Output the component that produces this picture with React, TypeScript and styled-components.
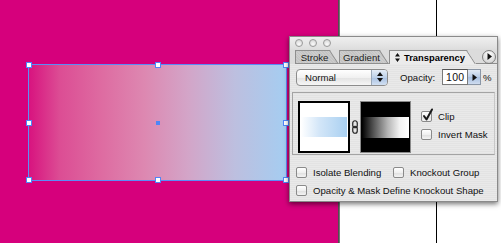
import React from "react";
import styled, { createGlobalStyle } from "styled-components";

const Global = createGlobalStyle`
  html, body { margin: 0; padding: 0; }
  body {
    width: 501px;
    height: 243px;
    overflow: hidden;
    font-family: "Liberation Sans", Arial, sans-serif;
    font-size: 9.6px;
    color: #111;
  }
`;

const Stage = styled.div`
  position: relative;
  width: 501px;
  height: 243px;
  display: flex;
  overflow: hidden;
`;

const Artboard = styled.div`
  position: relative;
  flex: none;
  width: 338px;
  background: #d6007c;
`;

const ArtEdge = styled.div`
  flex: none;
  width: 2px;
  background: linear-gradient(90deg, #3c3c3c, #8a8a8a);
`;

const Paper = styled.div`
  flex: 1;
  display: flex;
  padding-left: 96px;
  background: #fff;
`;

const Guide = styled.div`
  width: 1px;
  background: #000;
`;

const Shape = styled.div`
  position: absolute;
  left: 28px;
  top: 64px;
  width: 259px;
  height: 117px;
  box-sizing: border-box;
  border: 1.5px solid #5a8cf8;
  background: linear-gradient(
    90deg,
    #d8137f 0%,
    #dc4d94 12%,
    #de6ba1 28%,
    #dd88b1 45%,
    #d3a5c8 62%,
    #bdbfdf 80%,
    #a5cdf1 100%
  );
`;

const Handle = styled.div<{ $x: string; $y: string; $center?: boolean }>`
  position: absolute;
  left: ${(p) => p.$x};
  top: ${(p) => p.$y};
  width: ${(p) => (p.$center ? "4px" : "6px")};
  height: ${(p) => (p.$center ? "4px" : "6px")};
  box-sizing: border-box;
  transform: translate(-50%, -50%);
  background: ${(p) => (p.$center ? "#4f86f7" : "#fff")};
  border: ${(p) => (p.$center ? "none" : "1px solid #4f86f7")};
`;

const Palette = styled.div`
  position: absolute;
  left: 289px;
  top: 36px;
  width: 209px;
  height: 166px;
  box-sizing: border-box;
  border: 1px solid #8a8a8a;
  background: repeating-linear-gradient(0deg, #e9e9e9 0px, #e9e9e9 1px, #e3e3e3 1px, #e3e3e3 2px);
  box-shadow: 0 2px 5px rgba(0, 0, 0, 0.55);
  display: flex;
  flex-direction: column;
`;

const TitleBar = styled.div`
  height: 12px;
  flex: none;
  display: flex;
  align-items: center;
  gap: 6px;
  padding-left: 5px;
  background: linear-gradient(#efefef, #dedede);
`;

const Light = styled.div`
  width: 8px;
  height: 8px;
  box-sizing: border-box;
  border-radius: 50%;
  border: 1px solid #9a9a9a;
  background: radial-gradient(circle at 50% 70%, #fafafa, #d0d0d0);
`;

const TabBar = styled.div`
  height: 15px;
  flex: none;
  display: flex;
  align-items: flex-end;
  padding-left: 5px;
  background: #dcdcdc;
  position: relative;
`;

const Tab = styled.div<{ $active?: boolean; $w: number }>`
  position: relative;
  width: ${(p) => p.$w}px;
  height: 14px;
  box-sizing: border-box;
  display: flex;
  align-items: center;
  justify-content: center;
  gap: 4px;
  padding-right: 6px;
  font-weight: ${(p) => (p.$active ? "bold" : "normal")};
  font-size: ${(p) => (p.$active ? "9.4px" : "9.6px")};
  color: ${(p) => (p.$active ? "#000" : "#222")};
  background: ${(p) => (p.$active ? "#ebebeb" : "repeating-linear-gradient(45deg, #c4c4c4 0 1px, #cdcdcd 1px 2px)")};
  border-top: 1px solid #8e8e8e;
  border-left: 1px solid #8e8e8e;
  border-bottom: ${(p) => (p.$active ? "none" : "1px solid #8e8e8e")};
  clip-path: polygon(0 0, calc(100% - 9px) 0, 100% 100%, 0 100%);
  &::after {
    content: "";
    position: absolute;
    right: 4px;
    top: -2px;
    width: 1px;
    height: 18px;
    background: #8e8e8e;
    transform: rotate(-33deg);
  }
`;

const TabFill = styled.div`
  flex: 1;
  align-self: stretch;
  display: flex;
  align-items: center;
  justify-content: flex-end;
  padding-right: 1px;
  border-bottom: 1px solid #8e8e8e;
  box-sizing: border-box;
`;

const MenuButton = styled.div`
  width: 14px;
  height: 14px;
  box-sizing: border-box;
  border-radius: 50%;
  border: 1px solid #7e7e7e;
  background: radial-gradient(circle at 50% 30%, #ffffff, #c9c9c9);
  display: flex;
  align-items: center;
  justify-content: center;
  margin-top: 1px;
`;

const Body = styled.div`
  flex: 1;
  display: flex;
  flex-direction: column;
  padding: 4px 2px 0 2px;
`;

const TopRow = styled.div`
  display: flex;
  align-items: center;
  height: 18px;
  padding-left: 4px;
`;

const Select = styled.div`
  width: 92px;
  height: 17px;
  box-sizing: border-box;
  display: flex;
  border: 1px solid #8c8c8c;
  border-radius: 4px;
  overflow: hidden;
  background: linear-gradient(#ffffff, #f1f1f1 50%, #e2e2e2 51%, #f6f6f6);
`;

const SelectLabel = styled.div`
  flex: 1;
  display: flex;
  align-items: center;
  padding-left: 8px;
`;

const SelectArrows = styled.div`
  width: 15px;
  border-left: 1px solid #9aa8b8;
  display: flex;
  align-items: center;
  justify-content: center;
  background: linear-gradient(#e4ecf6, #bcd0e8 50%, #a9c1e2 51%, #d2e0f2);
`;

const FieldLabel = styled.div`
  margin-left: 12px;
  width: 42px;
`;

const NumInput = styled.div`
  width: 26px;
  height: 16px;
  box-sizing: border-box;
  border: 1px solid #7a7a7a;
  border-top-color: #555;
  background: #fff;
  display: flex;
  align-items: center;
  padding-left: 3px;
  font-size: 10.5px;
  letter-spacing: 0.3px;
`;

const StepButton = styled.div`
  width: 13px;
  height: 16px;
  box-sizing: border-box;
  border: 1px solid #8a96a6;
  border-left: none;
  background: linear-gradient(#e2eaf4, #b8cce6 50%, #a6bfe0 51%, #cfdcef);
  display: flex;
  align-items: center;
  justify-content: center;
`;

const Percent = styled.div`
  margin-left: 2px;
`;

const Group = styled.div`
  margin-top: 6px;
  height: 63px;
  box-sizing: border-box;
  border: 1px solid #a4a4a4;
  border-right-color: #c8c8c8;
  display: flex;
  align-items: flex-end;
  padding-left: 5px;
`;

const ArtThumb = styled.div`
  width: 52px;
  height: 52px;
  box-sizing: border-box;
  border: 2px solid #000;
  background: #fff;
  display: flex;
  flex-direction: column;
  justify-content: center;
  padding: 0 1px;
  margin-bottom: 1px;
`;

const ArtSwatch = styled.div`
  height: 20px;
  background: linear-gradient(90deg, #ffffff, #d3e6f8 40%, #a9d0f1);
`;

const LinkIcon = styled.div`
  width: 10px;
  height: 52px;
  margin-bottom: 1px;
  display: flex;
  align-items: center;
  justify-content: center;
`;

const MaskThumb = styled.div`
  width: 51px;
  height: 52px;
  box-sizing: border-box;
  border: 1px solid #8a8a8a;
  background: #000;
  display: flex;
  flex-direction: column;
  justify-content: center;
  padding: 0 1px;
  margin-bottom: 1px;
`;

const MaskBand = styled.div`
  height: 21px;
  background: linear-gradient(90deg, #000 0%, #555 25%, #b5b5b5 55%, #f2f2f2 80%, #fff 100%);
`;

const CheckCol = styled.div`
  align-self: flex-start;
  margin-top: 18px;
  margin-left: 10px;
  display: flex;
  flex-direction: column;
  gap: 7px;
`;

const CheckRow = styled.label`
  display: flex;
  align-items: center;
  gap: 6px;
  height: 11px;
`;

const Box = styled.span`
  position: relative;
  width: 11px;
  height: 11px;
  box-sizing: border-box;
  flex: none;
  border: 1px solid #8a8a8a;
  border-radius: 2px;
  background: linear-gradient(#ffffff, #f0f0f0 50%, #dedede 51%, #f4f4f4);
  & > svg {
    position: absolute;
    left: 0px;
    top: -4px;
  }
`;

const Options = styled.div`
  display: flex;
  flex-direction: column;
  gap: 7px;
  padding-left: 4px;
  margin-top: 12px;
`;

const OptionLine = styled.div`
  display: flex;
  align-items: center;
`;

const OptionItem = styled.label<{ $w?: number }>`
  display: flex;
  align-items: center;
  gap: 6px;
  width: ${(p) => (p.$w ? `${p.$w}px` : "auto")};
  height: 11px;
`;

const Check = ({ checked }: { checked?: boolean }) => (
  <Box>
    {checked && (
      <svg width="12" height="14" viewBox="0 0 12 14">
        <path d="M2 8 L4.5 11.5 L10 1.5" fill="none" stroke="#1a1a1a" strokeWidth="2" strokeLinecap="round" strokeLinejoin="round" />
      </svg>
    )}
  </Box>
);

const handles: Array<[string, string]> = [
  ["0%", "0%"],
  ["50%", "0%"],
  ["100%", "0%"],
  ["0%", "50%"],
  ["100%", "50%"],
  ["0%", "100%"],
  ["50%", "100%"],
  ["100%", "100%"],
];

export default function App() {
  return (
    <>
      <Global />
      <Stage>
        <Artboard>
          <Shape>
            {handles.map(([x, y], i) => (
              <Handle key={i} $x={x} $y={y} />
            ))}
            <Handle $x="50%" $y="50%" $center />
          </Shape>
        </Artboard>
        <ArtEdge />
        <Paper>
          <Guide />
        </Paper>

        <Palette>
          <TitleBar>
            <Light />
            <Light />
            <Light />
          </TitleBar>
          <TabBar>
            <Tab $w={44}>Stroke</Tab>
            <Tab $w={50}>Gradient</Tab>
            <Tab $w={87} $active>
              <svg width="5" height="9" viewBox="0 0 5 9">
                <path d="M2.5 0 L5 3.5 L0 3.5 Z M2.5 9 L5 5.5 L0 5.5 Z" fill="#111" />
              </svg>
              Transparency
            </Tab>
            <TabFill>
              <MenuButton>
                <svg width="5" height="7" viewBox="0 0 5 7">
                  <path d="M0.5 0 L5 3.5 L0.5 7 Z" fill="#111" />
                </svg>
              </MenuButton>
            </TabFill>
          </TabBar>
          <Body>
            <TopRow>
              <Select>
                <SelectLabel>Normal</SelectLabel>
                <SelectArrows>
                  <svg width="6" height="10" viewBox="0 0 6 10">
                    <path d="M3 0 L6 4 L0 4 Z M3 10 L6 6 L0 6 Z" fill="#111" />
                  </svg>
                </SelectArrows>
              </Select>
              <FieldLabel>Opacity:</FieldLabel>
              <NumInput>100</NumInput>
              <StepButton>
                <svg width="5" height="7" viewBox="0 0 5 7">
                  <path d="M0.5 0 L5 3.5 L0.5 7 Z" fill="#111" />
                </svg>
              </StepButton>
              <Percent>%</Percent>
            </TopRow>
            <Group>
              <ArtThumb>
                <ArtSwatch />
              </ArtThumb>
              <LinkIcon>
                <svg width="6" height="14" viewBox="0 0 6 14">
                  <rect x="0.75" y="0.75" width="4.5" height="7" rx="2.25" fill="none" stroke="#222" strokeWidth="1.2" />
                  <rect x="0.75" y="6.25" width="4.5" height="7" rx="2.25" fill="none" stroke="#222" strokeWidth="1.2" />
                </svg>
              </LinkIcon>
              <MaskThumb>
                <MaskBand />
              </MaskThumb>
              <CheckCol>
                <CheckRow>
                  <Check checked />
                  Clip
                </CheckRow>
                <CheckRow>
                  <Check />
                  Invert Mask
                </CheckRow>
              </CheckCol>
            </Group>
            <Options>
              <OptionLine>
                <OptionItem $w={97}>
                  <Check />
                  Isolate Blending
                </OptionItem>
                <OptionItem>
                  <Check />
                  Knockout Group
                </OptionItem>
              </OptionLine>
              <OptionLine>
                <OptionItem>
                  <Check />
                  Opacity &amp; Mask Define Knockout Shape
                </OptionItem>
              </OptionLine>
            </Options>
          </Body>
        </Palette>
      </Stage>
    </>
  );
}
